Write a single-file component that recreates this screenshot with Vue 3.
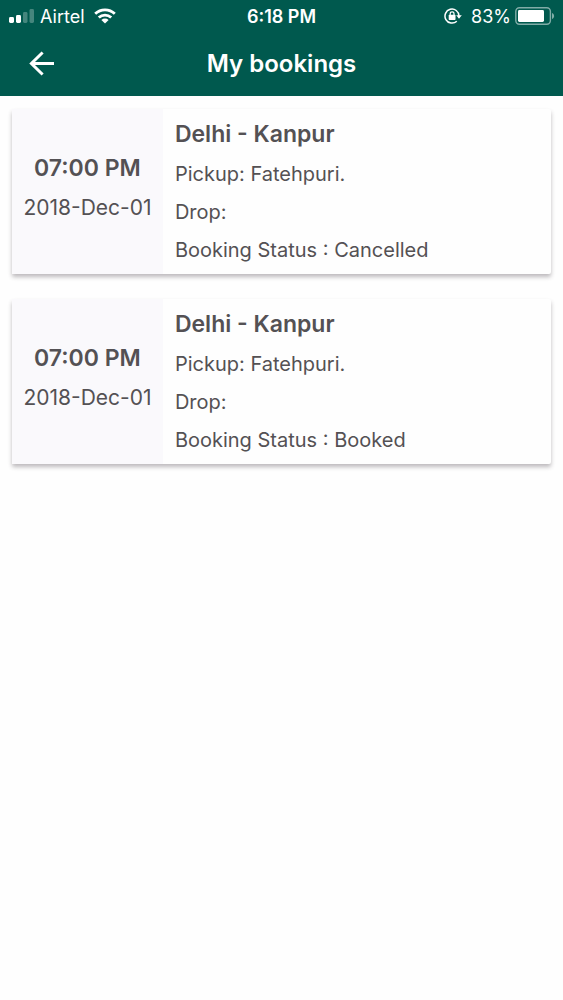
<script setup>
const bookings = [
  { id: 1, time: '07:00 PM', date: '2018-Dec-01', route: 'Delhi - Kanpur', pickup: 'Fatehpuri.', drop: '', status: 'Cancelled' },
  { id: 2, time: '07:00 PM', date: '2018-Dec-01', route: 'Delhi - Kanpur', pickup: 'Fatehpuri.', drop: '', status: 'Booked' },
]
</script>

<template>
  <div class="screen">
    <header class="top">
      <div class="status">
        <div class="status-side">
          <svg class="signal" width="26" height="16" viewBox="0 0 26 16" aria-hidden="true">
            <rect x="0" y="9" width="5" height="6" rx="1.4" fill="#fff" />
            <rect x="7" y="7" width="5" height="8" rx="1.4" fill="#fff" />
            <rect x="14" y="4" width="4.5" height="11" rx="1.4" fill="#fff" opacity=".27" />
            <rect x="20.5" y="1" width="4.5" height="14" rx="1.4" fill="#fff" opacity=".27" />
          </svg>
          <span>Airtel</span>
          <svg class="wifi" width="22" height="16" viewBox="0 0 22 16" aria-hidden="true">
            <g fill="none" stroke="#fff" stroke-width="2.8">
              <path d="M1.2 5.8a14 14 0 0 1 19.6 0" />
              <path d="M4.8 9.6a8.9 8.9 0 0 1 12.4 0" />
            </g>
            <path d="M11 15.4 7.4 11.9a5.2 5.2 0 0 1 7.2 0z" fill="#fff" />
          </svg>
        </div>
        <span class="clock">6:18 PM</span>
        <div class="status-side right">
          <svg class="lock" width="18" height="16" viewBox="0 0 18 16" aria-hidden="true">
            <path d="M12.8 13.2A7 7 0 1 1 15 8" fill="none" stroke="#fff" stroke-width="1.5" />
            <path d="M12.2 7.2h5.6L15 10.8z" fill="#fff" />
            <rect x="4.7" y="6.8" width="6.8" height="5.2" rx=".7" fill="#fff" />
            <path d="M6.2 7.2V5.8a1.9 1.9 0 0 1 3.8 0v1.4" fill="none" stroke="#fff" stroke-width="1.2" />
          </svg>
          <span>83%</span>
          <svg class="battery" width="40" height="18" viewBox="0 0 40 18" aria-hidden="true">
            <rect x=".8" y=".8" width="34.6" height="16.4" rx="3.6" fill="none" stroke="#fff" stroke-opacity=".5" stroke-width="1.4" />
            <rect x="3" y="3" width="26" height="12" rx="1.4" fill="#fff" />
            <path d="M37 6c2.8 1.2 2.8 4.8 0 6z" fill="#fff" opacity=".5" />
          </svg>
        </div>
      </div>
      <div class="bar">
        <button class="back" type="button" aria-label="Back">
          <svg width="26" height="26" viewBox="0 0 26 26" aria-hidden="true">
            <path d="M25 12.5H3M13.6 1.5 2.4 12.5l11.2 11" fill="none" stroke="#fff" stroke-width="3" />
          </svg>
        </button>
        <h1>My bookings</h1>
      </div>
    </header>
    <main class="list">
      <article v-for="b in bookings" :key="b.id" class="card">
        <div class="when">
          <strong>{{ b.time }}</strong>
          <span>{{ b.date }}</span>
        </div>
        <div class="info">
          <h2>{{ b.route }}</h2>
          <p>Pickup: {{ b.pickup }}</p>
          <p>Drop: {{ b.drop }}</p>
          <p>Booking Status : {{ b.status }}</p>
        </div>
      </article>
    </main>
  </div>
</template>

<style>
body {
  background: #fefefe;
}
</style>

<style scoped>
.screen {
  min-height: 100vh;
  font-family: Inter, "Liberation Sans", sans-serif;
  color: #545154;
  background: #fefefe;
}
.top {
  background: #00594e;
  color: #fff;
}
.status {
  display: grid;
  grid-template-columns: 1fr auto 1fr;
  align-items: center;
  height: 32px;
  padding: 0 8px;
  font-size: 18px;
}
.status-side {
  display: flex;
  align-items: center;
}
.right {
  justify-content: flex-end;
}
.signal {
  margin-left: 1px;
  margin-right: 5px;
}
.wifi {
  margin-left: 9px;
}
.lock {
  margin-right: 9px;
}
.battery {
  margin-left: 4px;
}
.clock {
  font-weight: 600;
}
.bar {
  display: grid;
  grid-template-columns: 84px 1fr 84px;
  align-items: center;
  height: 64px;
}
.back {
  display: flex;
  align-items: center;
  justify-content: center;
  height: 60px;
  padding: 0;
  border: 0;
  background: none;
  cursor: pointer;
}
h1 {
  margin: 0;
  text-align: center;
  font-size: 24px;
  line-height: 32px;
  font-weight: 600;
}
.list {
  display: flex;
  flex-direction: column;
  gap: 25px;
  padding: 13px 12px;
}
.card {
  display: flex;
  border-radius: 2px;
  background: #fefefe;
  box-shadow: 0 3px 4px rgba(40, 30, 40, 0.3);
}
.when {
  display: flex;
  flex: 0 0 28%;
  flex-direction: column;
  align-items: center;
  justify-content: center;
  padding-bottom: 7px;
  background: #faf9fc;
  font-size: 21px;
  line-height: 40px;
  white-space: nowrap;
}
strong {
  font-size: 23px;
  font-weight: 600;
}
.info {
  padding: 4px 12px 5px;
}
h2 {
  margin: 0;
  font-size: 23px;
  line-height: 42px;
  font-weight: 600;
}
p {
  margin: 0;
  font-size: 20px;
  line-height: 38px;
}
</style>
